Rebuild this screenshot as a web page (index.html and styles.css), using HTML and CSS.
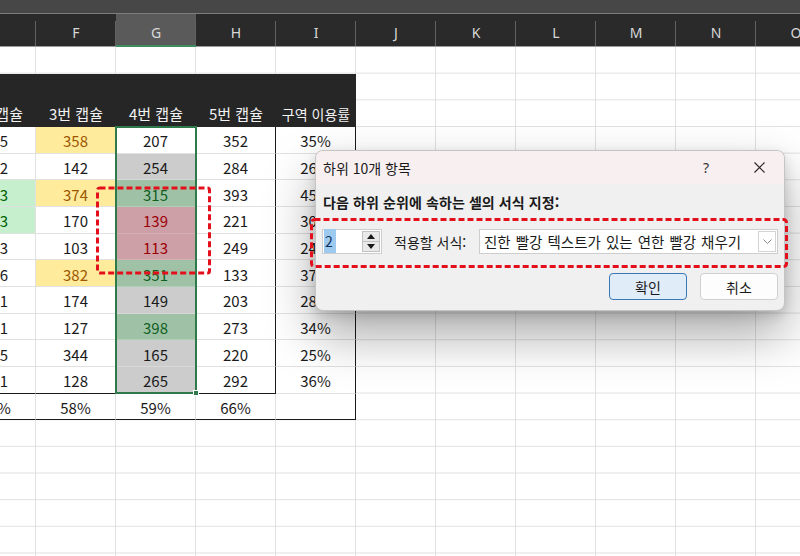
FILE: index.html
```html
<!DOCTYPE html>
<html lang="ko">
<head>
<meta charset="utf-8">
<title>하위 10개 항목</title>
<link rel="stylesheet" href="styles.css">
</head>
<body>
<div class="app">
  <div class="topbar"></div>
  <div class="colheads">
    <div class="ch">E</div><div class="ch">F</div><div class="ch ch-sel">G</div><div class="ch">H</div><div class="ch">I</div><div class="ch">J</div><div class="ch">K</div><div class="ch">L</div><div class="ch">M</div><div class="ch">N</div><div class="ch">O</div>
  </div>
  <div class="sheet">
    <div class="blankrow"></div>
    <div class="table">
      <div class="hd">2번 캡슐</div><div class="hd">3번 캡슐</div><div class="hd">4번 캡슐</div><div class="hd">5번 캡슐</div><div class="hd hd-narrow">구역 이용률</div>

      <div class="c">325</div><div class="c yel">358</div><div class="c active">207</div><div class="c rb">352</div><div class="c rb">35%</div>
      <div class="c">312</div><div class="c">142</div><div class="c sel">254</div><div class="c rb">284</div><div class="c rb">26%</div>
      <div class="c grn">243</div><div class="c yel">374</div><div class="c sel good">315</div><div class="c rb">393</div><div class="c rb">45%</div>
      <div class="c grn">263</div><div class="c">170</div><div class="c sel bad">139</div><div class="c rb">221</div><div class="c rb">30%</div>
      <div class="c">183</div><div class="c">103</div><div class="c sel bad">113</div><div class="c rb">249</div><div class="c rb">24%</div>
      <div class="c">216</div><div class="c yel">382</div><div class="c sel good">351</div><div class="c rb">133</div><div class="c rb">37%</div>
      <div class="c">141</div><div class="c">174</div><div class="c sel">149</div><div class="c rb">203</div><div class="c rb">28%</div>
      <div class="c">131</div><div class="c">127</div><div class="c sel good">398</div><div class="c rb">273</div><div class="c rb">34%</div>
      <div class="c">215</div><div class="c">344</div><div class="c sel">165</div><div class="c rb">220</div><div class="c rb">25%</div>
      <div class="c bb">141</div><div class="c bb">128</div><div class="c sel bb">265</div><div class="c rb bb">292</div><div class="c rb">36%</div>

      <div class="c bb">62%</div><div class="c bb">58%</div><div class="c bb">59%</div><div class="c bb">66%</div><div class="c bb rb"></div>

      <div class="selection"><span class="handle"></span></div>
    </div>
  </div>

  <div class="dialog">
    <div class="dlg-title">
      <span class="dlg-name">하위 10개 항목</span>
      <span class="dlg-help">?</span>
      <span class="dlg-close">
        <svg width="11" height="11" viewBox="0 0 11 11"><path d="M0.5 0.5 L10.5 10.5 M10.5 0.5 L0.5 10.5" stroke="#262626" stroke-width="1.1" fill="none"/></svg>
      </span>
    </div>
    <div class="dlg-body">
      <div class="dlg-label">다음 하위 순위에 속하는 셀의 서식 지정:</div>
      <div class="dlg-row">
        <div class="spin">
          <span class="spin-val"><span class="hl">2</span></span>
          <div class="spin-btns">
            <span class="spin-btn"><svg width="8" height="5" viewBox="0 0 8 5"><path d="M4 0 L8 5 L0 5 Z" fill="#1a1a1a"/></svg></span>
            <span class="spin-btn"><svg width="8" height="5" viewBox="0 0 8 5"><path d="M0 0 L8 0 L4 5 Z" fill="#1a1a1a"/></svg></span>
          </div>
        </div>
        <span class="fmt-label">적용할 서식:</span>
        <div class="combo">
          <span class="combo-text">진한 빨강 텍스트가 있는 연한 빨강 채우기</span>
          <span class="combo-btn"><svg width="9" height="5" viewBox="0 0 9 5"><path d="M0.5 0.5 L4.5 4.5 L8.5 0.5" stroke="#8a8a8a" stroke-width="1" fill="none"/></svg></span>
        </div>
      </div>
      <div class="dlg-buttons">
        <button class="btn primary">확인</button>
        <button class="btn">취소</button>
      </div>
    </div>
  </div>

  <svg class="annot" width="800" height="556" viewBox="0 0 800 556">
    <rect x="97.5" y="188" width="112" height="85" rx="2" fill="none" stroke="#e3101c" stroke-width="3" stroke-dasharray="6 3"/>
    <rect x="311.5" y="219.5" width="475" height="47" rx="3" fill="none" stroke="#e3101c" stroke-width="3" stroke-dasharray="6 3"/>
  </svg>
</div>
</body>
</html>
```

FILE: styles.css
```css
* { box-sizing: border-box; }
html, body { margin: 0; padding: 0; }
body {
  background: #fff;
  font-family: "Noto Sans CJK KR", "Noto Sans", sans-serif;
  color: #1a1a1a;
}
.app {
  position: relative;
  width: 800px;
  height: 556px;
  overflow: hidden;
}
.topbar {
  height: 14px;
  background: #474747;
  border-bottom: 1px solid #7c7c7c;
}
.colheads {
  display: grid;
  grid-template-columns: repeat(11, 80px);
  margin-left: -44px;
  height: 33px;
  background: #2a2a2a;
}
.ch {
  display: flex;
  align-items: center;
  justify-content: center;
  padding-top: 5px;
  color: #d8d8d8;
  font-family: "Noto Sans", sans-serif;
  font-size: 14px;
  border-bottom: 1px solid #9a9a9a;
  background-image: linear-gradient(#626262, #626262);
  background-size: 1px 25px;
  background-position: right bottom;
  background-repeat: no-repeat;
}
.ch-sel {
  background-color: #5a5a5a;
  border-bottom: 2px solid #3f8d5f;
}
.sheet {
  height: 509px;
  background-color: #fff;
  background-image:
    linear-gradient(to left, #e1e1e1 1px, transparent 1px),
    linear-gradient(to top, #e1e1e1 1px, transparent 1px);
  background-size: 80px 100%, 100% 26.667px;
  background-position: -44px 0, 0 0;
}
.blankrow { height: 26.667px; }
.table {
  position: relative;
  display: grid;
  grid-template-columns: repeat(5, 80px);
  grid-template-rows: 53.333px repeat(11, 26.667px);
  width: 400px;
  margin-left: -44px;
  font-size: 15px;
}
.hd {
  display: flex;
  align-items: flex-end;
  justify-content: center;
  padding-bottom: 3px;
  background: #262626;
  color: #f2f2f2;
  white-space: nowrap;
}
.hd-narrow { font-size: 14px; }
.c {
  display: flex;
  align-items: center;
  justify-content: center;
  padding-top: 2px;
  background: #fff;
  color: #1a1a1a;
  border-right: 1px solid #e1e1e1;
  border-bottom: 1px solid #e1e1e1;
}
.c.yel { background: #ffeb9c; color: #9c5700; }
.c.grn { background: #c6efce; color: #006100; }
.c.sel { background: #cccccc; border-bottom-color: #d8d8d8; }
.c.sel.good { background: #9fc2a6; color: #0f5f1e; border-bottom-color: #b0cdb6; }
.c.sel.bad { background: #cca0a6; color: #9c0006; border-bottom-color: #d4b0b5; }
.c.rb { border-right-color: #1a1a1a; }
.c.bb { border-bottom-color: #1a1a1a; }
.selection {
  position: absolute;
  left: 159px;
  top: 52.333px;
  width: 82px;
  height: 268px;
  border: 2px solid #2f7a4a;
  pointer-events: none;
}
.handle {
  position: absolute;
  right: -4px;
  bottom: -4px;
  width: 6px;
  height: 6px;
  background: #2f7a4a;
  border: 1px solid #fff;
}

/* dialog */
.dialog {
  position: absolute;
  left: 315px;
  top: 150px;
  width: 470px;
  height: 161px;
  background: #f0f0f0;
  border: 1px solid #c4c4c4;
  border-radius: 8px;
  overflow: hidden;
  box-shadow: 0 24px 50px rgba(0, 0, 0, 0.34), 0 4px 12px rgba(0, 0, 0, 0.14);
  font-family: "Noto Sans CJK KR", sans-serif;
  color: #1a1a1a;
}
.dlg-title {
  display: flex;
  align-items: center;
  height: 33px;
  padding: 0 15px 0 7px;
  background: #f8eff1;
}
.dlg-name { font-size: 14px; }
.dlg-help {
  margin-left: auto;
  width: 20px;
  text-align: center;
  font-family: "Noto Sans", sans-serif;
  font-size: 14px;
  color: #333;
}
.dlg-close {
  display: flex;
  align-items: center;
  justify-content: center;
  width: 20px;
  margin-left: 33px;
}
.dlg-body {
  padding: 0 6px;
}
.dlg-label {
  margin-top: 10px;
  padding-left: 1px;
  height: 17px;
  line-height: 17px;
  font-size: 14px;
  font-weight: bold;
  letter-spacing: 0.1px;
  white-space: nowrap;
}
.dlg-row {
  display: flex;
  align-items: center;
  margin-top: 18px;
  height: 25px;
}
.spin {
  display: flex;
  align-items: center;
  width: 60px;
  height: 25px;
  background: #fff;
  border: 1px solid #cdcdcd;
  padding: 0 1px 0 1px;
}
.spin-val {
  flex: 1;
  font-size: 14px;
  line-height: 17px;
}
.hl {
  background: #9fcaf0;
  color: #10325a;
  padding: 2px 3px 2px 1px;
}
.spin-btns {
  display: flex;
  flex-direction: column;
  width: 18px;
  height: 21px;
}
.spin-btn {
  display: flex;
  align-items: center;
  justify-content: center;
  flex: 1;
  background: #e9e9e9;
  border: 1px solid #c2c2c2;
}
.spin-btn + .spin-btn { border-top: none; }
.fmt-label {
  margin-left: 12px;
  font-size: 14px;
  white-space: nowrap;
}
.combo {
  display: flex;
  align-items: center;
  margin-left: auto;
  width: 299px;
  height: 25px;
  background: #fff;
  border: 1px solid #cdcdcd;
  padding: 0 1px 0 4px;
}
.combo-text {
  flex: 1;
  font-size: 14.5px;
  word-spacing: 1px;
  white-space: nowrap;
  overflow: hidden;
}
.combo-btn {
  display: flex;
  align-items: center;
  justify-content: center;
  width: 18px;
  height: 21px;
  border: 1px solid #d4d4d4;
}
.dlg-buttons {
  display: flex;
  justify-content: flex-end;
  gap: 13px;
  margin-top: 19px;
  padding-right: 0;
}
.btn {
  width: 78px;
  height: 27px;
  font-family: "Noto Sans CJK KR", sans-serif;
  font-size: 14px;
  color: #1a1a1a;
  background: #fdfdfd;
  border: 1px solid #d0d0d0;
  border-radius: 4px;
  padding: 0;
}
.btn.primary {
  background: #e0ecf8;
  border-color: #3a78b5;
}
.annot {
  position: absolute;
  left: 0;
  top: 0;
  pointer-events: none;
}
```
